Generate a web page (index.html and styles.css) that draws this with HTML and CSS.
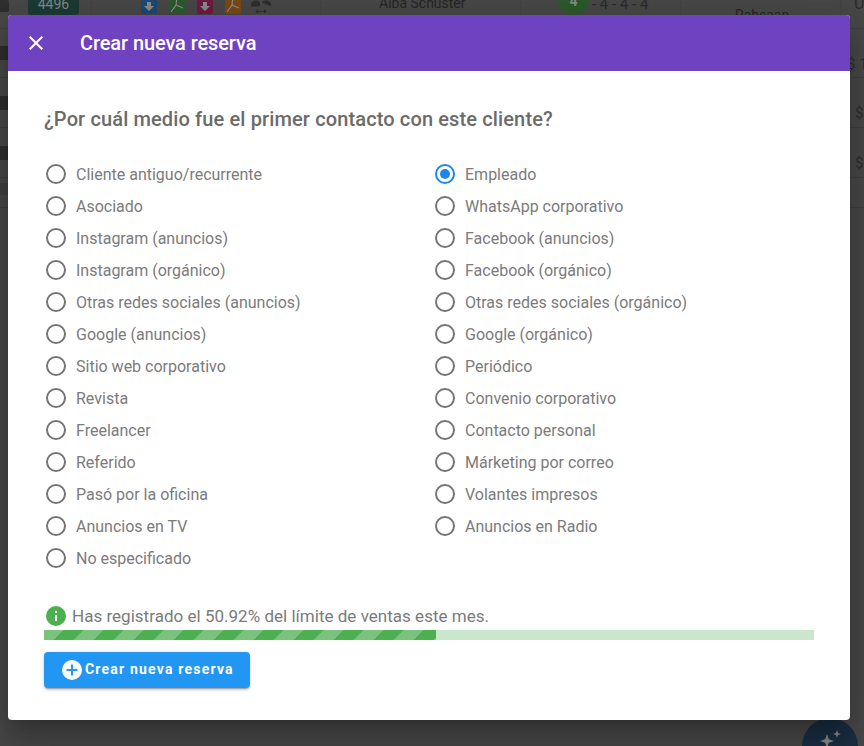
FILE: index.html
```html
<!DOCTYPE html>
<html lang="es">
<head>
<meta charset="utf-8">
<title>Crear nueva reserva</title>
<link rel="stylesheet" href="styles.css">
</head>
<body>
<div class="backdrop">
  <div class="row row-top">
    <div class="cell c-stub"><span class="stub"></span></div>
    <div class="cell c-code"><span class="code">4496</span></div>
    <div class="cell c-docs">
      <svg class="doc" viewBox="0 0 16 20"><path fill="#1c4a75" d="M2 0h12a2 2 0 0 1 2 2v16a2 2 0 0 1-2 2H2a2 2 0 0 1-2-2V2a2 2 0 0 1 2-2z"/><path fill="#8c8c8c" d="M6 8h4v4h3l-5 5-5-5h3z"/></svg>
      <svg class="doc" viewBox="0 0 16 20"><path fill="#2c5a2e" d="M2 0h12a2 2 0 0 1 2 2v16a2 2 0 0 1-2 2H2a2 2 0 0 1-2-2V2a2 2 0 0 1 2-2z"/><path fill="none" stroke="#8c8c8c" stroke-width="1.200" d="M2 18l5-7 1-8M7 11l7 3"/></svg>
      <svg class="doc" viewBox="0 0 16 20"><path fill="#701a42" d="M2 0h12a2 2 0 0 1 2 2v16a2 2 0 0 1-2 2H2a2 2 0 0 1-2-2V2a2 2 0 0 1 2-2z"/><path fill="#8c8c8c" d="M6 8h4v4h3l-5 5-5-5h3z"/></svg>
      <svg class="doc" viewBox="0 0 16 20"><path fill="#7a4a14" d="M2 0h12a2 2 0 0 1 2 2v16a2 2 0 0 1-2 2H2a2 2 0 0 1-2-2V2a2 2 0 0 1 2-2z"/><path fill="none" stroke="#8c8c8c" stroke-width="1.200" d="M2 18l5-7 1-8M7 11l7 3"/></svg>
      <svg class="doc-wide" viewBox="0 0 20 14"><path fill="#2f2f2f" d="M0 6.500a5 5 0 0 1 9-4V6.500zM11 2.500a5 5 0 0 1 9 4z"/><path fill="none" stroke="#2f2f2f" stroke-width="1.200" d="M5 11.500h10M5 11.500l2-1.500M5 11.500l2 1.500M15 11.500l-2-1.500M15 11.500l-2 1.500"/></svg>
    </div>
    <div class="cell c-name">Alba Schuster</div>
    <div class="cell c-rate"><span class="rate-dot">4</span><span>- 4 - 4 - 4</span></div>
    <div class="cell c-agent">Rahsaan</div>
    <div class="cell c-us">U:</div>
  </div>
  <div class="row row-a"><span class="shade"></span><span class="money">$ 1</span></div>
  <div class="row row-b"><span class="shade"></span><span class="money">$</span></div>
  <div class="row row-b"><span class="shade"></span><span class="money">$</span></div>
  <div class="row row-c"><span class="shade shade-small"></span></div>
  <div class="fab">
    <svg viewBox="0 0 24 24" class="fab-icon"><path fill="#8a8a8a" d="M9 7l1.800 5.200L16 14l-5.200 1.800L9 21l-1.800-5.200L2 14l5.200-1.800zM19 3l1 3 3 1-3 1-1 3-1-3-3-1 3-1z"/></svg>
  </div>
</div>

<main class="dialog">
  <header class="dialog-bar">
    <svg class="close" viewBox="0 0 24 24"><path fill="#fff" d="M19 6.410 17.590 5 12 10.590 6.410 5 5 6.410 10.590 12 5 17.590 6.410 19 12 13.410 17.590 19 19 17.590 13.410 12z"/></svg>
    <h1 class="dialog-title">Crear nueva reserva</h1>
  </header>
  <section class="dialog-body">
    <h2 class="question">¿Por cuál medio fue el primer contacto con este cliente?</h2>
    <div class="options">
      <div class="col">
        <label class="opt"><span class="radio"></span>Cliente antiguo/recurrente</label>
        <label class="opt"><span class="radio"></span>Asociado</label>
        <label class="opt"><span class="radio"></span>Instagram (anuncios)</label>
        <label class="opt"><span class="radio"></span>Instagram (orgánico)</label>
        <label class="opt"><span class="radio"></span>Otras redes sociales (anuncios)</label>
        <label class="opt"><span class="radio"></span>Google (anuncios)</label>
        <label class="opt"><span class="radio"></span>Sitio web corporativo</label>
        <label class="opt"><span class="radio"></span>Revista</label>
        <label class="opt"><span class="radio"></span>Freelancer</label>
        <label class="opt"><span class="radio"></span>Referido</label>
        <label class="opt"><span class="radio"></span>Pasó por la oficina</label>
        <label class="opt"><span class="radio"></span>Anuncios en TV</label>
        <label class="opt"><span class="radio"></span>No especificado</label>
      </div>
      <div class="col">
        <label class="opt"><span class="radio on"></span>Empleado</label>
        <label class="opt"><span class="radio"></span>WhatsApp corporativo</label>
        <label class="opt"><span class="radio"></span>Facebook (anuncios)</label>
        <label class="opt"><span class="radio"></span>Facebook (orgánico)</label>
        <label class="opt"><span class="radio"></span>Otras redes sociales (orgánico)</label>
        <label class="opt"><span class="radio"></span>Google (orgánico)</label>
        <label class="opt"><span class="radio"></span>Periódico</label>
        <label class="opt"><span class="radio"></span>Convenio corporativo</label>
        <label class="opt"><span class="radio"></span>Contacto personal</label>
        <label class="opt"><span class="radio"></span>Márketing por correo</label>
        <label class="opt"><span class="radio"></span>Volantes impresos</label>
        <label class="opt"><span class="radio"></span>Anuncios en Radio</label>
      </div>
    </div>
    <div class="limit">
      <svg class="info" viewBox="0 0 20 20"><circle cx="10" cy="10" r="10" fill="#4caf50"/><path fill="#fff" d="M9 5h2v2H9zM9 9h2v6H9z"/></svg>
      <span>Has registrado el 50.92% del límite de ventas este mes.</span>
    </div>
    <div class="progress"><div class="progress-fill" style="width:50.92%"></div></div>
    <button class="submit" type="button">
      <svg class="plus" viewBox="0 0 20 20"><circle cx="10" cy="10" r="10" fill="#fff"/><path fill="#2196f3" d="M9 4.500h2V9h4.500v2H11v4.500H9V11H4.500V9H9z"/></svg>
      <span class="submit-label">Crear nueva reserva</span>
    </button>
  </section>
</main>
</body>
</html>
```
FILE: styles.css
```css
*, *::before, *::after { box-sizing: border-box; }
html, body { margin: 0; height: 100%; }
body {
  width: 864px;
  height: 746px;
  overflow: hidden;
  position: relative;
  background: #484848;
  font-family: Roboto, "Liberation Sans", sans-serif;
}

/* dimmed page behind the dialog */
.backdrop { position: absolute; inset: 0; overflow: hidden; color: #2b2b2b; font-size: 14px; }
.row { position: relative; border-bottom: 1px solid #404040; display: flex; align-items: center; padding-left: 855px; }
.row-top { height: 29px; padding-left: 0; align-items: flex-start; }
.row-a { height: 49px; padding-left: 847px; }
.row-b { height: 50px; }
.row-c { height: 30px; padding-left: 0; }
.shade { position: absolute; left: 0; width: 8px; height: 14px; background: #2e2e2e; }
.shade-small { background: #414141; top: 5px; height: 12px; }
.money { font-size: 15px; color: #2e2e2e; white-space: nowrap; margin-top: 21px; }
.cell { height: 28px; border-right: 1px solid #444; flex: none; }
.c-stub { width: 28px; border: 0; }
.stub { display: block; width: 9px; height: 12px; background: #2f2f2f; border-radius: 0 2px 2px 0; }
.c-code { width: 64px; }
.code {
  display: block; width: 51px; height: 15px; border-radius: 0 0 3px 3px;
  background: #1c3b34; color: #828a88; font-size: 14px; line-height: 8px; text-align: center;
}
.c-docs { width: 229px; padding-left: 49px; display: flex; gap: 12px; align-items: flex-start; overflow: hidden; }
.doc { width: 16px; height: 20px; margin-top: -6px; flex: none; display: block; }
.doc-wide { width: 20px; height: 14px; margin-left: -2px; flex: none; display: block; }
.c-name { width: 200px; padding-left: 58px; line-height: 6px; color: #262626; white-space: nowrap; }
.c-rate { width: 160px; padding-left: 37px; display: flex; gap: 3px; white-space: nowrap; line-height: 8px; font-size: 15px; overflow: hidden; }
.rate-dot {
  width: 31px; height: 31px; margin-top: -16px; border-radius: 50%; background: #2d5a2d;
  color: #7f8f7f; font-size: 14px; font-weight: 700; text-align: center; line-height: 34px; flex: none;
}
.c-agent { width: 160px; padding: 7px 0 0 54px; line-height: 16px; color: #262626; }
.c-us { width: 23px; border: 0; padding-left: 13px; line-height: 8px; font-size: 16px; }
.fab {
  position: absolute; left: 802px; top: 718px; width: 56px; height: 56px; border-radius: 50%;
  background: #1a2e43; display: flex; justify-content: center; padding-top: 9px;
}
.fab-icon { width: 24px; height: 24px; }

/* dialog */
.dialog {
  position: absolute; left: 8px; top: 15px; width: 842px; height: 705px;
  border-radius: 4px; overflow: hidden; background: #fff;
  box-shadow: 0 11px 15px -7px rgba(0,0,0,.2), 0 24px 38px 3px rgba(0,0,0,.14), 0 9px 46px 8px rgba(0,0,0,.12);
  display: flex; flex-direction: column;
}
.dialog-bar {
  height: 56px; flex: none; background: #6f42c1; color: #fff;
  display: flex; align-items: center; padding-left: 16px; gap: 32px;
}
.close { width: 24px; height: 24px; flex: none; }
.dialog-title { margin: 0; font-size: 20px; font-weight: 500; letter-spacing: -.1px; }
.dialog-body { padding: 36px 36px 0; flex: 1; }
.question { margin: 0 0 27px; font-size: 20px; line-height: 24px; font-weight: 500; color: #6b6b6b; letter-spacing: .13px; }
.options { display: flex; }
.col { width: 389px; flex: none; display: flex; flex-direction: column; }
.opt { height: 32px; display: flex; align-items: center; gap: 8px; font-size: 16px; font-weight: 400; color: #7b7b7b; white-space: nowrap; }
.radio {
  width: 24px; height: 24px; flex: none; position: relative; display: block;
}
.radio::before {
  content: ""; position: absolute; left: 2px; top: 2px; width: 20px; height: 20px;
  border: 2px solid #757575; border-radius: 50%;
}
.radio.on::before { border-color: #1e88e5; }
.radio.on::after {
  content: ""; position: absolute; left: 7px; top: 7px; width: 10px; height: 10px;
  border-radius: 50%; background: #1e88e5;
}
.limit { margin-top: 30px; height: 24px; display: flex; align-items: center; gap: 6px; padding-left: 2px; font-size: 17px; letter-spacing: .02px; color: #7b7b7b; white-space: nowrap; }
.info { width: 20px; height: 20px; flex: none; }
.progress { margin-top: 2px; width: 770px; height: 10px; background: #c9e7cb; }
.progress-fill {
  height: 100%; background-color: #4caf50;
  background-image: linear-gradient(135deg, rgba(255,255,255,.25) 25%, transparent 0, transparent 50%, rgba(255,255,255,.25) 0, rgba(255,255,255,.25) 75%, transparent 0, transparent);
  background-size: 40px 40px;
}
.submit {
  margin-top: 12px; width: 206px; height: 36px; border: 0; border-radius: 4px; padding: 0 0 0 18px;
  background: #2196f3; color: #fff; font-family: inherit; font-size: 14px; font-weight: 700; letter-spacing: 1.2px;
  display: flex; align-items: center; gap: 3px;
  box-shadow: 0 3px 1px -2px rgba(0,0,0,.2), 0 2px 2px 0 rgba(0,0,0,.14), 0 1px 5px 0 rgba(0,0,0,.12);
}
.submit-label { margin-top: -2px; }
.plus { width: 20px; height: 20px; flex: none; }
```
